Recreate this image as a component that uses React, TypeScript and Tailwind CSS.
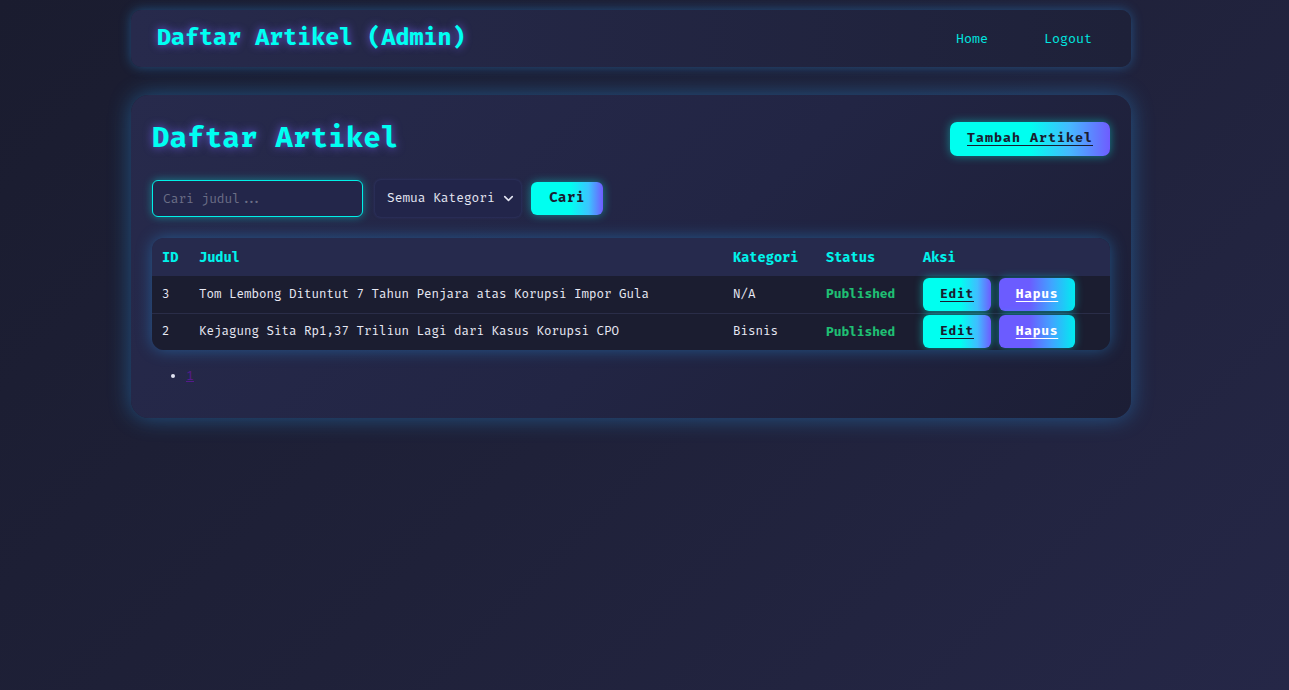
import { ChevronDown } from "lucide-react";

const rows = [
  { id: 3, judul: "Tom Lembong Dituntut 7 Tahun Penjara atas Korupsi Impor Gula", kategori: "N/A", status: "Published" },
  { id: 2, judul: "Kejagung Sita Rp1,37 Triliun Lagi dari Kasus Korupsi CPO", kategori: "Bisnis", status: "Published" },
];

const mono = "font-['Fira_Code','DejaVu_Sans_Mono',monospace]";

export default function App() {
  return (
    <div
      className={`min-h-[690px] w-full bg-[linear-gradient(135deg,#1a1c2f_0%,#1f2139_50%,#252747_100%)] pl-[131px] pt-[10px] ${mono}`}
    >
      <div className="flex w-[1000px] flex-col gap-[28px]">
        {/* top bar */}
        <header className="flex h-[57px] items-center justify-between rounded-[10px] bg-[linear-gradient(90deg,#272a4c_0%,#1e2139_100%)] pl-[26px] pr-[25px] shadow-[0_0_12px_rgba(40,140,220,0.45)]">
          <h1 className="text-[22.8px] font-bold text-[#00fff2] [text-shadow:0_0_9px_rgba(120,100,255,0.85)]">
            Daftar Artikel (Admin)
          </h1>
          <nav className="flex items-center gap-[28px] text-[13px] text-[#00e8e0]">
            <a className="px-[14px] pt-[2px]">Home</a>
            <a className="px-[14px] pt-[2px]">Logout</a>
          </nav>
        </header>

        {/* main panel */}
        <section className="rounded-[18px] bg-[linear-gradient(135deg,#272a4c_0%,#222544_55%,#1c1e35_100%)] px-[21px] pb-[31px] pt-[23px] shadow-[0_0_22px_rgba(40,150,230,0.45)]">
          <div className="flex items-center justify-between">
            <h2 className="text-[28px] font-bold tracking-[0.4px] text-[#00fff2] [text-shadow:0_0_10px_rgba(120,100,255,0.8)]">
              Daftar Artikel
            </h2>
            <button className="h-[34px] w-[160px] rounded-[7px] bg-[linear-gradient(90deg,#00fff0_0%,#00fff0_50%,#46b8ff_75%,#6f5cff_100%)] text-[13px] font-bold tracking-[1px] text-[#1a1c30] underline underline-offset-[3px] shadow-[0_0_10px_rgba(0,255,240,0.45)]">
              Tambah Artikel
            </button>
          </div>

          <div className="mt-[20px] flex items-center gap-[10px]">
            <input
              placeholder="Cari judul..."
              className="mr-[2px] h-[37px] w-[211px] rounded-[6px] border border-[#00f0e8] bg-[#23264a] px-[10px] text-[12.5px] text-[#e0e2f0] placeholder-[#6b6e86] outline-none shadow-[0_0_8px_rgba(0,240,230,0.45)]"
            />
            <div className="flex h-[37px] w-[146px] items-center justify-between rounded-[6px] bg-[#22254a] pl-[12px] pr-[5px] text-[12.5px] text-[#e4e6f2] shadow-[0_0_3px_rgba(60,70,140,0.6)]">
              <span>Semua Kategori</span>
              <ChevronDown size={15} strokeWidth={2.5} className="text-[#e4e6f2]" />
            </div>
            <button className="h-[33px] w-[72px] rounded-[6px] bg-[linear-gradient(90deg,#00fff0_0%,#00fff0_55%,#3cc4ff_80%,#6f5cff_100%)] text-[13.5px] font-bold tracking-[0.6px] text-[#1a1c30] shadow-[0_0_10px_rgba(0,255,240,0.45)]">
              Cari
            </button>
          </div>

          <div className="mt-[21px] overflow-hidden rounded-[12px] shadow-[0_0_16px_rgba(40,150,230,0.45)]">
            <table className="w-full border-collapse text-left">
              <thead>
                <tr className="h-[38px] bg-[#262a4d] text-[13.3px] font-bold text-[#00f2ea]">
                  <th className="w-[37px] pl-[10px] pt-[3px] font-bold">ID</th>
                  <th className="w-[534px] pl-[10px] pt-[3px] font-bold">Judul</th>
                  <th className="w-[93px] pl-[10px] pt-[3px] font-bold">Kategori</th>
                  <th className="w-[97px] pl-[10px] pt-[3px] font-bold">Status</th>
                  <th className="pl-[10px] pt-[3px] font-bold">Aksi</th>
                </tr>
              </thead>
              <tbody className="bg-[#1b1d30] text-[12.2px] text-[#e8e9f4]">
                {rows.map((r, i) => (
                  <tr key={r.id} className={`h-[37px] ${i > 0 ? "border-t border-[#2a2d48]" : ""}`}>
                    <td className="pl-[10px] pt-[1px]">{r.id}</td>
                    <td className="pl-[10px] pt-[1px]">{r.judul}</td>
                    <td className="pl-[10px] pt-[1px]">{r.kategori}</td>
                    <td className="pl-[10px] pt-[1px] text-[12.5px] font-bold text-[#1fbf73]">{r.status}</td>
                    <td className="pl-[10px]">
                      <div className="flex items-center gap-[8px]">
                        <button className="h-[33px] w-[68px] rounded-[6px] bg-[linear-gradient(90deg,#00fff0_0%,#00fff0_55%,#40bdff_80%,#6f5cff_100%)] text-[12.5px] font-bold tracking-[0.8px] text-[#1a1c30] underline underline-offset-[3px] shadow-[0_0_9px_rgba(0,255,240,0.5)]">
                          Edit
                        </button>
                        <button className="h-[33px] w-[76px] rounded-[6px] bg-[linear-gradient(90deg,#6b5cff_0%,#6b5cff_40%,#3fa6ff_70%,#00ecf0_100%)] text-[12.5px] font-bold tracking-[0.8px] text-white underline underline-offset-[3px] shadow-[0_0_9px_rgba(0,230,240,0.45)]">
                          Hapus
                        </button>
                      </div>
                    </td>
                  </tr>
                ))}
              </tbody>
            </table>
          </div>

          <ul className="mt-[17px] list-disc pl-[34px] text-[13px] text-[#e2e4f2]">
            <li className="h-[20px]">
              <a className="text-[#551a8b] underline">1</a>
            </li>
          </ul>
        </section>
      </div>
    </div>
  );
}
